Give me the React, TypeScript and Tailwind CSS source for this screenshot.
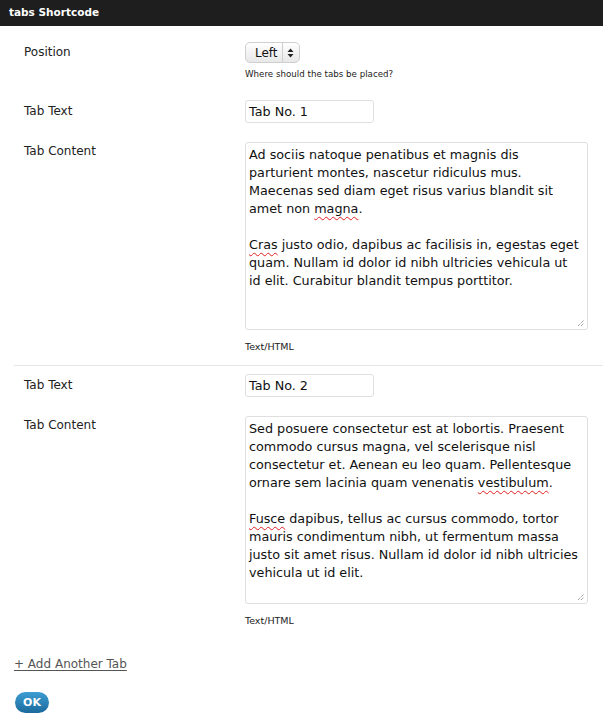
import React from 'react';

const font = { fontFamily: '"DejaVu Sans", Verdana, sans-serif' };

const Squiggle: React.FC<{ children: React.ReactNode }> = ({ children }) => (
  <span className="underline decoration-wavy decoration-[#e02020] decoration-1 underline-offset-[3px]">{children}</span>
);

const ResizeGrip = () => (
  <svg className="absolute right-[2px] bottom-[2px]" width="8" height="8" viewBox="0 0 8 8">
    <path d="M1 7 L7 1 M4 7 L7 4" stroke="#777" strokeWidth="1" strokeDasharray="1 1" />
  </svg>
);

interface TabBlock {
  title: string;
  lines: React.ReactNode[];
}

const tabs: TabBlock[] = [
  {
    title: 'Tab No. 1',
    lines: [
      'Ad sociis natoque penatibus et magnis dis',
      'parturient montes, nascetur ridiculus mus.',
      'Maecenas sed diam eget risus varius blandit sit',
      <>amet non <Squiggle>magna</Squiggle>.</>,
      '',
      <><Squiggle>Cras</Squiggle> justo odio, dapibus ac facilisis in, egestas eget</>,
      'quam. Nullam id dolor id nibh ultricies vehicula ut',
      'id elit. Curabitur blandit tempus porttitor.',
    ],
  },
  {
    title: 'Tab No. 2',
    lines: [
      'Sed posuere consectetur est at lobortis. Praesent',
      'commodo cursus magna, vel scelerisque nisl',
      'consectetur et. Aenean eu leo quam. Pellentesque',
      <>ornare sem lacinia quam venenatis <Squiggle>vestibulum</Squiggle>.</>,
      '',
      <><Squiggle>Fusce</Squiggle> dapibus, tellus ac cursus commodo, tortor</>,
      'mauris condimentum nibh, ut fermentum massa',
      'justo sit amet risus. Nullam id dolor id nibh ultricies',
      'vehicula ut id elit.',
    ],
  },
];

const Label: React.FC<{ children: React.ReactNode; className?: string }> = ({ children, className }) => (
  <div className={`w-[245px] shrink-0 pl-6 text-[12px] text-[#222] ${className ?? ''}`}>{children}</div>
);

const TabFields: React.FC<{ tab: TabBlock }> = ({ tab }) => (
  <div>
    <div className="flex">
      <Label className="pt-[2px]">Tab Text</Label>
      <div className="w-[129px] h-[23px] border border-[#dfdfdf] rounded-[3px] px-[3px] flex items-center text-[12.75px] text-[#111]">
        {tab.title}
      </div>
    </div>
    <div className="flex mt-[19px]">
      <Label>Tab Content</Label>
      <div>
        <div className="relative w-[343px] h-[188px] border border-[#dfdfdf] rounded-[3px] px-[3px] pt-[3px] text-[12.75px] leading-[18px] text-[#111]">
          {tab.lines.map((l, i) => (
            <div key={i} className="whitespace-nowrap h-[18px]">{l}</div>
          ))}
          <ResizeGrip />
        </div>
        <div className="mt-[11px] text-[9.5px] leading-[12px] text-[#222]">Text/HTML</div>
      </div>
    </div>
  </div>
);

export default function App() {
  return (
    <div className="w-[603px] h-[726px] bg-white" style={font}>
      <div className="h-[26px] bg-[#1e1e1e] text-white font-bold text-[10.5px] flex items-center pl-[9px]">
        tabs Shortcode
      </div>

      <div className="flex pt-4">
        <Label className="pt-[1px]">Position</Label>
        <div>
          <div className="w-[55px] h-[21px] rounded-[5px] border border-[#cfcfcf] bg-gradient-to-b from-white to-[#e8e8e8] flex items-center text-[12px] text-[#111]">
            <span className="pl-[9px] pr-[4px]">Left</span>
            <span className="h-full w-px bg-[#cfcfcf]" />
            <svg className="ml-[4px]" width="7" height="10" viewBox="0 0 7 10">
              <path d="M3.5 0.5 L6.5 4 H0.5 Z M3.5 9.5 L6.5 6 H0.5 Z" fill="#222" />
            </svg>
          </div>
          <div className="mt-[5px] text-[8.7px] leading-[12px] text-[#222]">Where should the tabs be placed?</div>
        </div>
      </div>

      <div className="mt-[20px]">
        <TabFields tab={tabs[0]} />
      </div>

      <div className="ml-[14px] mt-[12px] h-px bg-[#e6e6e6]" />

      <div className="mt-[8px]">
        <TabFields tab={tabs[1]} />
      </div>

      <div className="mt-[28px] pl-[14px] text-[12px] text-[#555] underline underline-offset-2">
        + Add Another Tab
      </div>

      <div className="mt-[16px] pl-[15px]">
        <button className="w-[34px] h-[21px] rounded-full bg-gradient-to-b from-[#3c9ed3] to-[#1b6a9c] text-white font-bold text-[11px] leading-none">
          OK
        </button>
      </div>
    </div>
  );
}
